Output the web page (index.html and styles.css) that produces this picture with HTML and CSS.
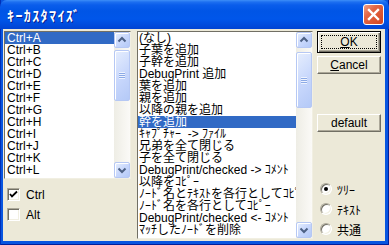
FILE: index.html
```html
<!DOCTYPE html>
<html lang="ja">
<head>
    <meta charset="UTF-8">
    <title>キーカスタマイズ</title>
    <link rel="stylesheet" href="styles.css">
</head>
<body>
    <div class="window">
        <div class="titlebar">
            <span class="title">ｷｰｶｽﾀﾏｲｽﾞ</span>
            <span class="close">
                <svg width="19" height="19" viewBox="0 0 19 19"><path d="M5 5 L14 14 M14 5 L5 14" stroke="#fff" stroke-width="2.4" stroke-linecap="square"/></svg>
            </span>
        </div>
        <div class="client">
            <div class="left-col">
                <div class="listbox keys">
                    <div class="items">
                        <div class="item sel">Ctrl+A</div>
                        <div class="item">Ctrl+B</div>
                        <div class="item">Ctrl+C</div>
                        <div class="item">Ctrl+D</div>
                        <div class="item">Ctrl+E</div>
                        <div class="item">Ctrl+F</div>
                        <div class="item">Ctrl+G</div>
                        <div class="item">Ctrl+H</div>
                        <div class="item">Ctrl+I</div>
                        <div class="item">Ctrl+J</div>
                        <div class="item">Ctrl+K</div>
                        <div class="item">Ctrl+L</div>
                    </div>
                    <div class="vscroll">
                        <div class="sb-btn"><svg width="14" height="14" viewBox="0 0 14 14"><path d="M3.5 8.5 L7 5 L10.5 8.5" fill="none" stroke="#4d6185" stroke-width="2"/></svg></div>
                        <div class="thumb" style="margin-top: 2px; height: 51px;"><span class="grip"></span></div>
                        <div class="sb-btn down"><svg width="14" height="14" viewBox="0 0 14 14"><path d="M3.5 5.5 L7 9 L10.5 5.5" fill="none" stroke="#4d6185" stroke-width="2"/></svg></div>
                    </div>
                </div>
                <div class="checks">
                    <label class="check"><span class="box on"><svg width="11" height="11" viewBox="0 0 11 11"><path d="M2 5 L4 7.5 L9 2.5" fill="none" stroke="#000" stroke-width="1.8"/></svg></span>Ctrl</label>
                    <label class="check"><span class="box"></span>Alt</label>
                </div>
            </div>

            <div class="listbox commands">
                <div class="items">
                    <div class="item">(なし)</div>
                    <div class="item">子葉を追加</div>
                    <div class="item">子幹を追加</div>
                    <div class="item">DebugPrint 追加</div>
                    <div class="item">葉を追加</div>
                    <div class="item">親を追加</div>
                    <div class="item">以降の親を追加</div>
                    <div class="item sel">幹を追加</div>
                    <div class="item">ｷｬﾌﾟﾁｬｰ  -&gt; ﾌｧｲﾙ</div>
                    <div class="item">兄弟を全て閉じる</div>
                    <div class="item">子を全て閉じる</div>
                    <div class="item">DebugPrint/checked -&gt; ｺﾒﾝﾄ</div>
                    <div class="item">以降をｺﾋﾟｰ</div>
                    <div class="item">ﾉｰﾄﾞ名とﾃｷｽﾄを各行としてｺﾋﾟｰ</div>
                    <div class="item">ﾉｰﾄﾞ名を各行としてｺﾋﾟｰ</div>
                    <div class="item">DebugPrint/checked &lt;- ｺﾒﾝﾄ</div>
                    <div class="item">ﾏｯﾁしたﾉｰﾄﾞを削除</div>
                </div>
                <div class="vscroll">
                    <div class="sb-btn"><svg width="14" height="14" viewBox="0 0 14 14"><path d="M3.5 8.5 L7 5 L10.5 8.5" fill="none" stroke="#4d6185" stroke-width="2"/></svg></div>
                    <div class="thumb" style="margin-top: 4px; height: 56px;"><span class="grip"></span></div>
                    <div class="sb-btn down"><svg width="14" height="14" viewBox="0 0 14 14"><path d="M3.5 5.5 L7 9 L10.5 5.5" fill="none" stroke="#4d6185" stroke-width="2"/></svg></div>
                </div>
            </div>

            <div class="right-col">
                <button class="btn def"><span class="focus"><u>O</u>K</span></button>
                <button class="btn cancel"><u>C</u>ancel</button>
                <button class="btn reset">default</button>
                <div class="radios">
                    <label class="radio"><span class="dot on"></span>ﾂﾘｰ</label>
                    <label class="radio"><span class="dot"></span>ﾃｷｽﾄ</label>
                    <label class="radio"><span class="dot"></span>共通</label>
                </div>
            </div>
        </div>
    </div>
</body>
</html>
```

FILE: styles.css
```css
body {
    margin: 0;
    font-family: "Liberation Sans", "Noto Sans CJK JP", sans-serif;
    font-size: 12px;
    color: #000;
    background: #fff;
}
.window {
    width: 389px;
    height: 245px;
    display: flex;
    flex-direction: column;
    background: #0855e0;
    box-shadow: inset 1px 0 0 #0030b8, inset -1px -1px 0 #001f9c;
}
.titlebar {
    height: 29px;
    flex: none;
    display: flex;
    align-items: center;
    justify-content: space-between;
    padding: 0 5px 0 7px;
    background: linear-gradient(to bottom, #3d8ef8 0px, #1d6ff0 2px, #0a5deb 5px, #0055e6 11px, #0056ea 19px, #004bdc 25px, #0043d2 29px);
    border-radius: 7px 7px 0 0;
}
.title {
    color: #fff;
    font-family: "Noto Sans CJK JP", sans-serif;
    font-weight: bold;
    font-size: 14px;
    letter-spacing: 1.4px;
    text-shadow: 1px 1px 0 #0a1e8c;
}
.close {
    width: 21px;
    height: 21px;
    box-sizing: border-box;
    border: 1px solid #fff;
    border-radius: 3px;
    background: linear-gradient(135deg, #f0a088 0%, #e26645 35%, #d4441f 100%);
    display: flex;
    align-items: center;
    justify-content: center;
}
.client {
    flex: 1;
    margin: 0 4px 4px 3px;
    background: #ece9d8;
    padding: 2px 4px 2px 1px;
    display: flex;
    gap: 6px;
}
.left-col {
    width: 127px;
    display: flex;
    flex-direction: column;
}
.listbox {
    display: flex;
    background: #fff;
    border: 1px solid;
    border-color: #716f64 #f1efe2 #f1efe2 #716f64;
    box-sizing: border-box;
}
.keys {
    height: 148px;
}
.commands {
    width: 176px;
    height: 208px;
    margin-right: -2px;
}
.items {
    flex: 1;
    overflow: hidden;
}
.item {
    height: 12px;
    line-height: 12px;
    white-space: pre;
}
.keys .item {
    padding-left: 2px;
}
.commands .item {
    padding-left: 1px;
}
.item.sel {
    background: #316ac5;
    color: #fff;
}
.vscroll {
    width: 16px;
    display: flex;
    flex-direction: column;
    background: linear-gradient(to right, #eeede5, #fbfaf7);
}
.sb-btn, .thumb {
    box-sizing: border-box;
    border: 1px solid #b6c8f4;
    border-radius: 2px;
    background: linear-gradient(135deg, #e6eefd 0%, #c9d8fc 50%, #b4c9f7 100%);
    box-shadow: inset 1px 1px 0 #fff;
}
.sb-btn {
    height: 16px;
    display: flex;
    align-items: center;
    justify-content: center;
}
.sb-btn.down {
    margin-top: auto;
}
.thumb {
    display: flex;
    align-items: center;
    justify-content: center;
}
.grip {
    width: 6px;
    height: 7px;
    background: repeating-linear-gradient(to bottom, #eef3fe 0px, #eef3fe 1px, #8caae6 1px, #8caae6 2px);
}
.checks {
    display: flex;
    flex-direction: column;
    gap: 7px;
    padding: 9px 0 0 3px;
}
.check {
    display: flex;
    align-items: center;
    gap: 6px;
    height: 13px;
}
.box {
    width: 13px;
    height: 13px;
    box-sizing: border-box;
    border: 1px solid;
    border-color: #aca899 #fff #fff #aca899;
    box-shadow: inset 1px 1px 0 #716f64, inset -1px -1px 0 #f1efe2;
    background: #fff;
    display: flex;
    align-items: center;
    justify-content: center;
}
.right-col {
    width: 64px;
    display: flex;
    flex-direction: column;
}
.btn {
    font-family: "Liberation Sans", sans-serif;
    font-size: 12px;
    color: #000;
    height: 18px;
    padding: 0;
    background: #ece9d8;
    border: 1px solid;
    border-color: #fff #716f64 #716f64 #fff;
    box-shadow: inset -1px -1px 0 #aca899;
}
.btn.def {
    height: 22px;
    border: 1px solid #000;
    box-shadow: inset 1px 1px 0 #fff, inset -1px -1px 0 #716f64, inset -2px -2px 0 #aca899;
    display: flex;
    padding: 3px;
}
.focus {
    flex: 1;
    border: 1px dotted #000;
    display: flex;
    align-items: center;
    justify-content: center;
}
.cancel {
    margin-top: 3px;
}
.reset {
    margin-top: 40px;
}
.radios {
    margin-top: auto;
    padding-left: 3px;
}
.radio {
    display: flex;
    align-items: center;
    gap: 5px;
    height: 20px;
}
.dot {
    width: 12px;
    height: 12px;
    box-sizing: border-box;
    border-radius: 50%;
    border: 1px solid;
    border-color: #aca899 #fff #fff #aca899;
    box-shadow: inset 1px 1px 0 #716f64, inset -1px -1px 0 #f1efe2;
    background: #fff;
    display: flex;
    align-items: center;
    justify-content: center;
}
.dot.on::after {
    content: "";
    width: 4px;
    height: 4px;
    border-radius: 50%;
    background: #000;
}
```
